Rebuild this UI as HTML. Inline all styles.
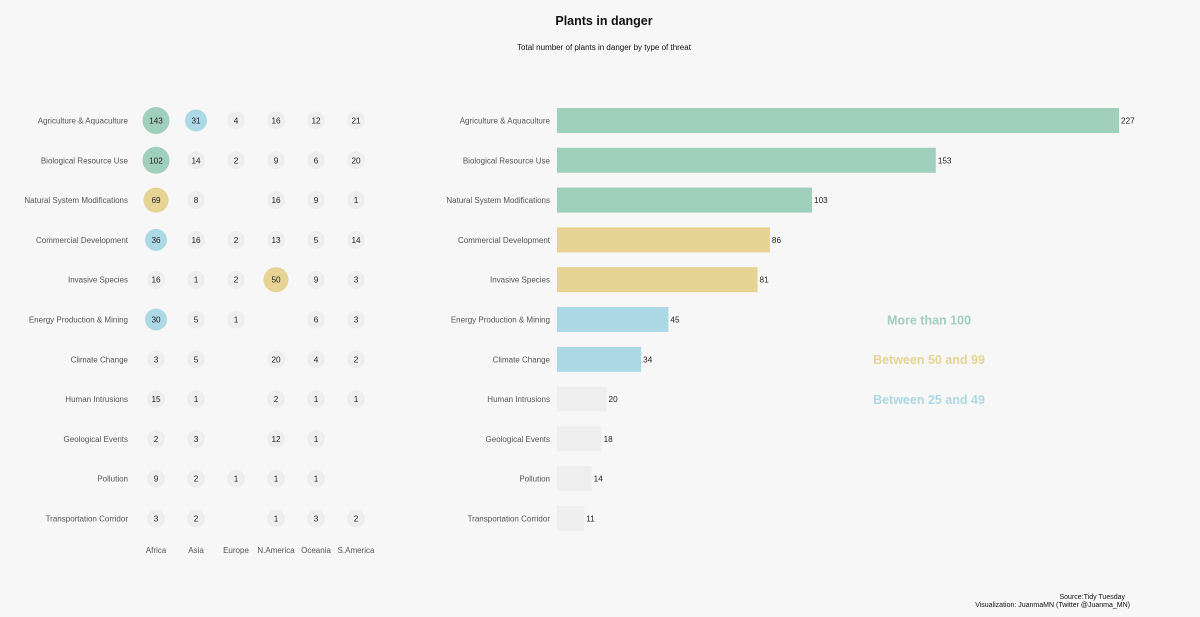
<!DOCTYPE html><html><head><style>body{margin:0;background:#f7f7f7}svg{display:block;font-family:"Liberation Sans",Arial,sans-serif}</style></head><body>
<svg width="1200" height="617" xmlns="http://www.w3.org/2000/svg">
<rect width="1200" height="617" fill="#f7f7f7"/>
<text x="604" y="25" text-anchor="middle" font-size="12.5" font-weight="bold" fill="#111">Plants in danger</text>
<text x="604" y="50" text-anchor="middle" font-size="8" fill="#111">Total number of plants in danger by type of threat</text>
<g id="g"></g>
<text x="929" y="324.5" text-anchor="middle" font-size="12.5" font-weight="bold" fill="#a1cfbd">More than 100</text>
<text x="929" y="364" text-anchor="middle" font-size="12.5" font-weight="bold" fill="#e6d495">Between 50 and 99</text>
<text x="929" y="404" text-anchor="middle" font-size="12.5" font-weight="bold" fill="#add8e6">Between 25 and 49</text>
<text x="1125" y="599" text-anchor="end" font-size="7" fill="#111">Source:Tidy Tuesday</text>
<text x="1130" y="607" text-anchor="end" font-size="7" fill="#111">Visualization: JuanmaMN (Twitter @Juanma_MN)</text>
</svg>
<script>
var rows=[["Agriculture & Aquaculture",[143,31,4,16,12,21],227],["Biological Resource Use",[102,14,2,9,6,20],153],["Natural System Modifications",[69,8,null,16,9,1],103],["Commercial Development",[36,16,2,13,5,14],86],["Invasive Species",[16,1,2,50,9,3],81],["Energy Production & Mining",[30,5,1,null,6,3],45],["Climate Change",[3,5,null,20,4,2],34],["Human Intrusions",[15,1,null,2,1,1],20],["Geological Events",[2,3,null,12,1,null],18],["Pollution",[9,2,1,1,1,null],14],["Transportation Corridor",[3,2,null,1,3,2],11]];
var cx=[156,196,236,276,316,356],cn=["Africa","Asia","Europe","N.America","Oceania","S.America"];
function col(v){return v>=100?"#a1cfbd":v>=50?"#e6d495":v>=25?"#add8e6":"#eeeeee"}
var s="";
rows.forEach(function(r,i){var y=120.5+i*39.8;
s+='<text x="128" y="'+(y+3)+'" text-anchor="end" font-size="8" fill="#555">'+r[0].replace("&","&amp;")+'</text>';
s+='<text x="550" y="'+(y+3)+'" text-anchor="end" font-size="8" fill="#555">'+r[0].replace("&","&amp;")+'</text>';
r[1].forEach(function(v,j){if(v==null)return;var rad=v>=100?13.5:v>=50?12.5:v>=25?11:9;
s+='<circle cx="'+cx[j]+'" cy="'+y+'" r="'+rad+'" fill="'+col(v)+'"/><text x="'+cx[j]+'" y="'+(y+3)+'" text-anchor="middle" font-size="8.2" fill="#222">'+v+'</text>';});
var w=r[2]*2.476;
s+='<rect x="557" y="'+(y-12.5)+'" width="'+w+'" height="25" fill="'+col(r[2])+'"/><text x="'+(559+w)+'" y="'+(y+3)+'" font-size="8.2" fill="#222">'+r[2]+'</text>';});
cn.forEach(function(c,j){s+='<text x="'+cx[j]+'" y="553" text-anchor="middle" font-size="8" fill="#555">'+c+'</text>'});
document.getElementById("g").innerHTML=s;
</script></body></html>
